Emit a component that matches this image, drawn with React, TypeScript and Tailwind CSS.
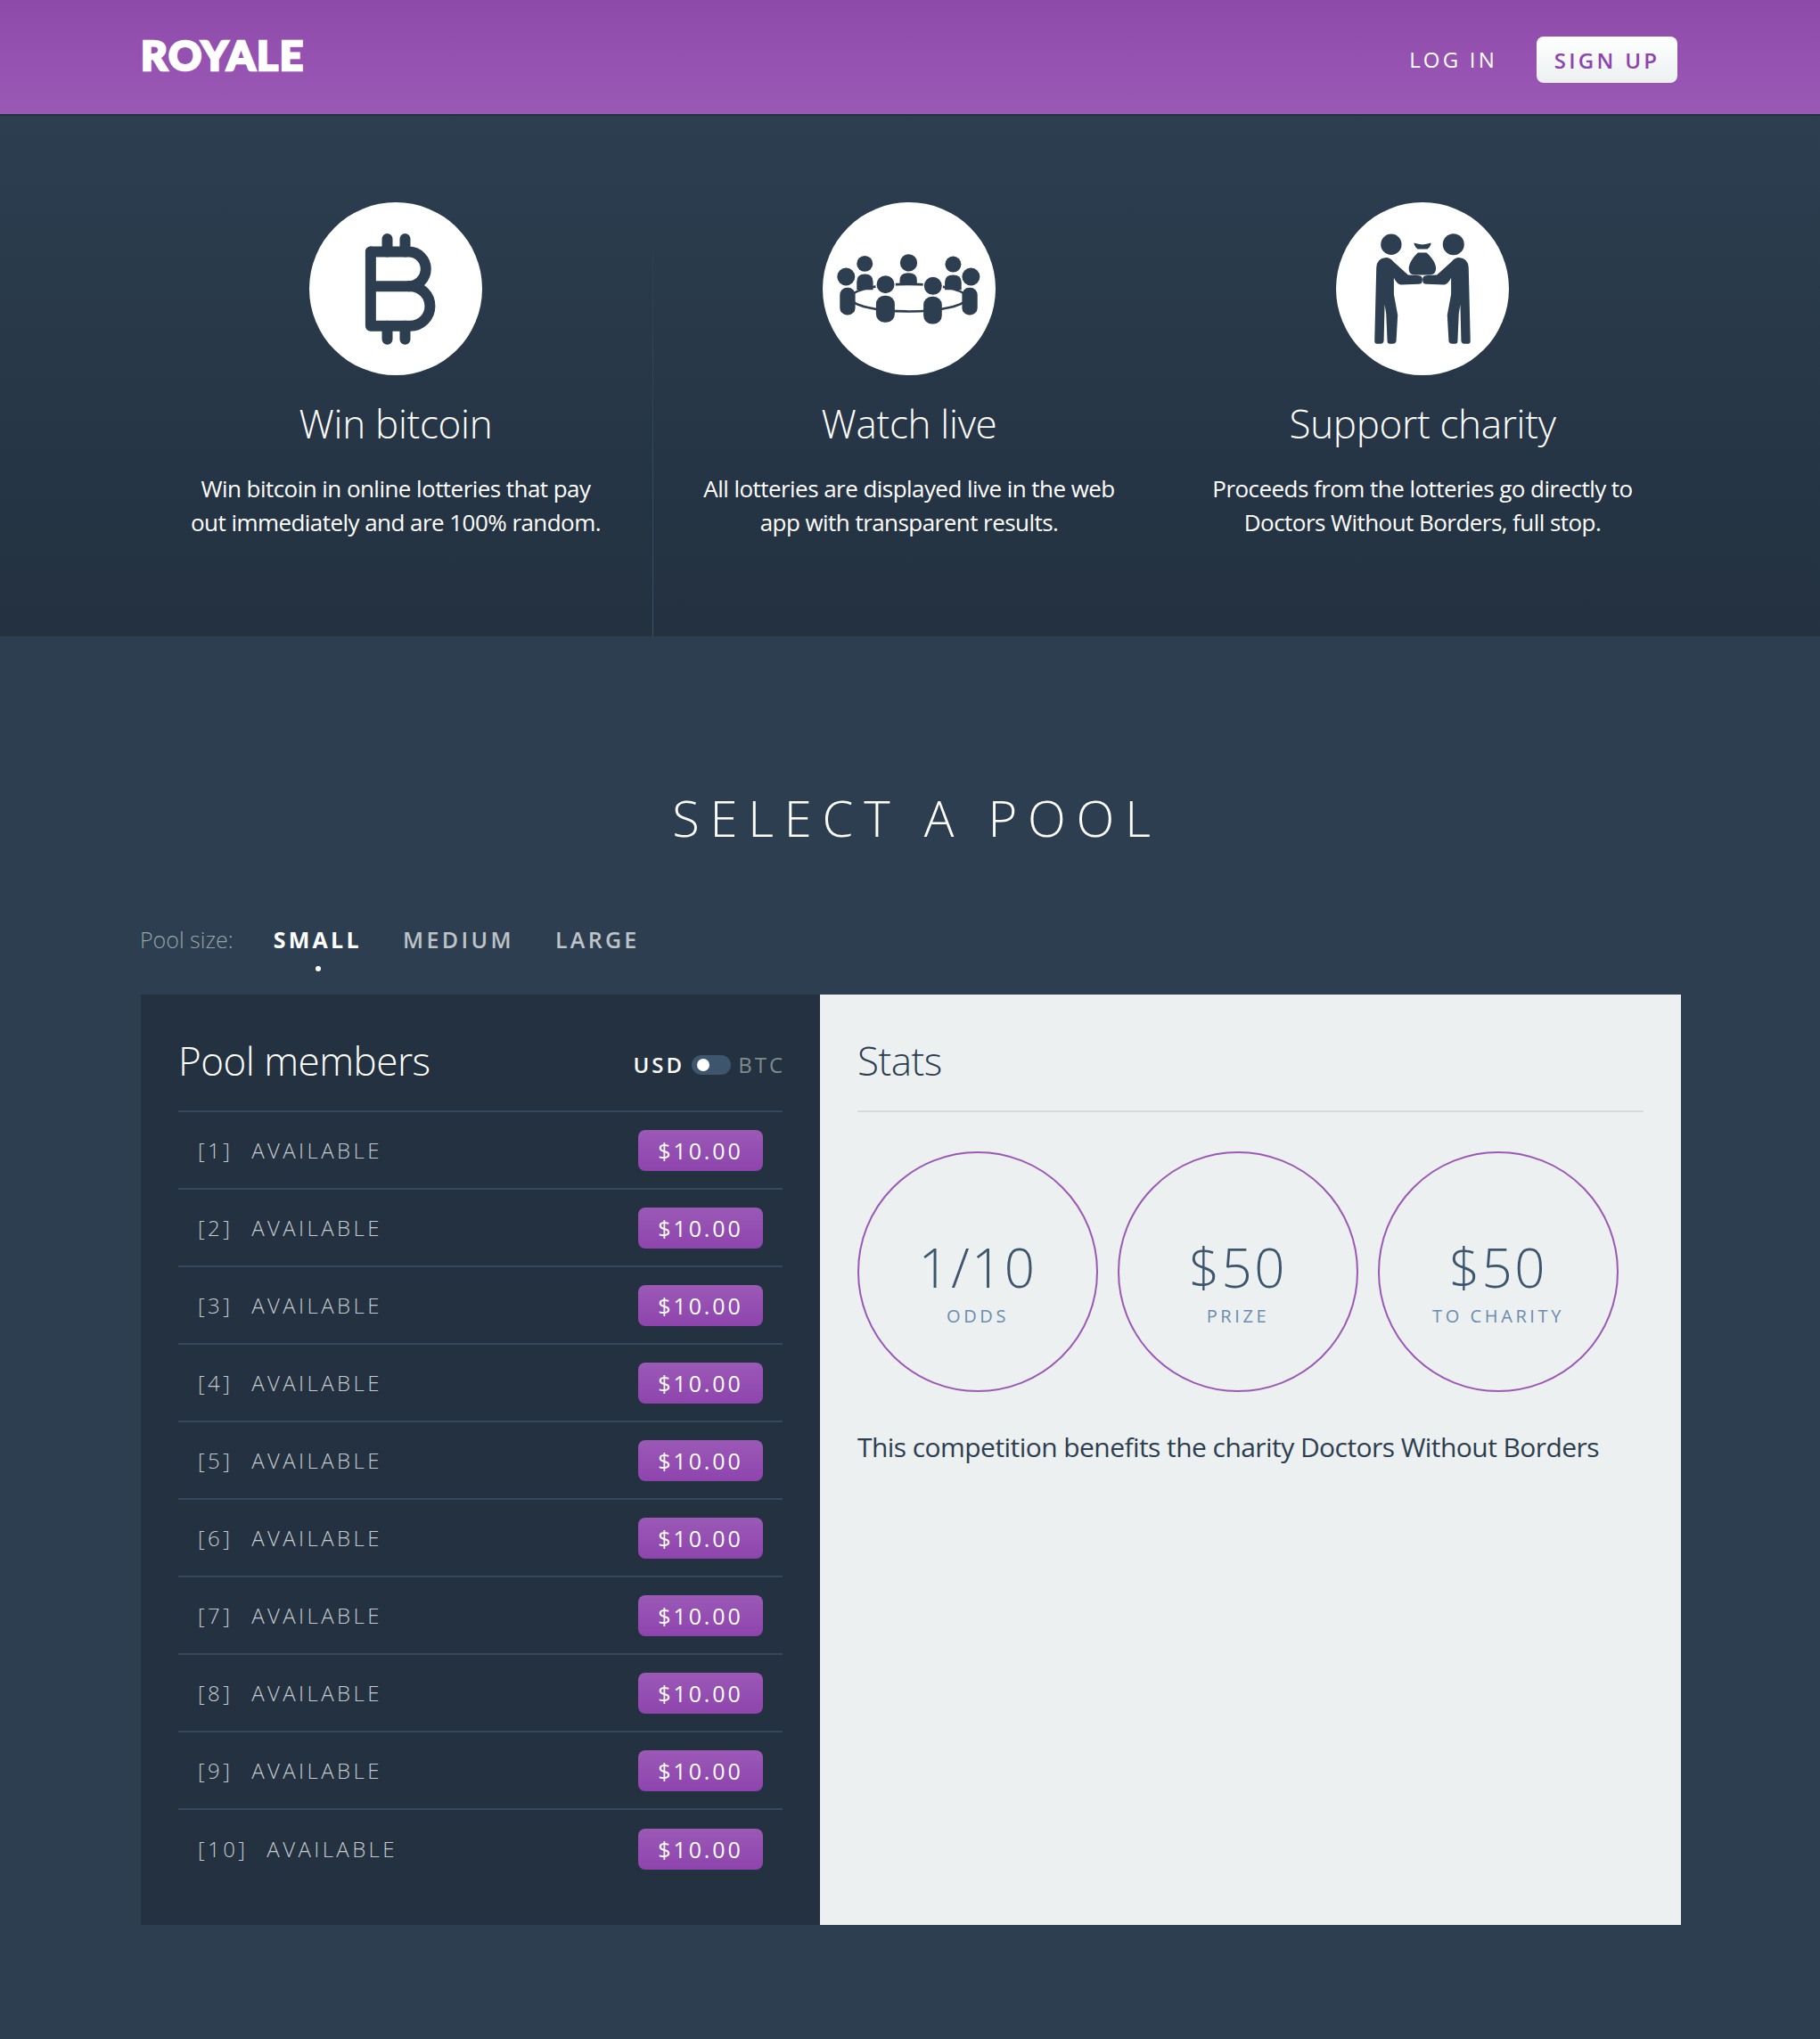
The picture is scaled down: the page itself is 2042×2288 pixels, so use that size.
import React from "react";

const dark = "#2c3e50";

function Bitcoin() {
  return (
    <svg viewBox="80 50 583 583" className="w-[194px] h-[194px] block">
      <circle cx="371.5" cy="341.5" r="291.5" fill="#fff" />
      <g fill="none" stroke={dark} strokeWidth="36" strokeLinecap="round" strokeLinejoin="round">
        <path d="M287 217 H415 A58 58 0 0 1 415 333 H287" />
        <path d="M415 333 H420 A67 67 0 0 1 420 467 H287 V217" />
        <path d="M343 173 V217 M403 173 V217 M343 467 V512 M403 467 V512" />
      </g>
    </svg>
  );
}

function People() {
  return (
    <svg viewBox="70 50 583 583" className="w-[194px] h-[194px] block">
      <circle cx="361.5" cy="341.5" r="291.5" fill="#fff" />
      <g fill={dark}>
        <ellipse cx="360" cy="372" rx="195" ry="46" fill="none" stroke={dark} strokeWidth="8" />
        <circle cx="212" cy="257" r="27" />
        <circle cx="360" cy="254" r="29" />
        <circle cx="510" cy="259" r="27" />
        <path d="M185 345 V318 Q185 292 212 292 Q240 292 240 318 V345 Z" />
        <path d="M330 325 V312 Q330 288 359 288 Q388 288 388 312 V325 Z" />
        <path d="M482 345 V320 Q482 295 510 295 Q538 295 538 320 V345 Z" />
        <circle cx="149" cy="301" r="30" />
        <circle cx="570" cy="301" r="30" />
        <rect x="128" y="338" width="52" height="92" rx="24" />
        <rect x="540" y="338" width="52" height="92" rx="24" />
        <circle cx="282" cy="327" r="32" stroke="#fff" strokeWidth="4" />
        <circle cx="442" cy="332" r="32" stroke="#fff" strokeWidth="4" />
        <rect x="250" y="365" width="63" height="90" rx="28" />
        <rect x="410" y="368" width="62" height="92" rx="28" />
      </g>
    </svg>
  );
}

const personPath =
  "M193 270 Q195 238 225 236 Q240 236 250 250 L300 295 Q340 296 345 300 Q351 308 346 322 Q342 326 335 326 L275 328 Q262 326 252 305 L252 360 L265 430 L260 518 Q258 527 248 527 L238 527 Q230 527 230 518 L226 425 L221 395 L218 518 Q216 527 208 527 L195 527 Q186 527 187 515 Z";

function Charity() {
  return (
    <svg viewBox="57 50 583 583" className="w-[194px] h-[194px] block">
      <circle cx="348.5" cy="341.5" r="291.5" fill="#fff" />
      <g fill={dark}>
        <circle cx="243" cy="192" r="35" />
        <circle cx="453" cy="192" r="36" />
        <path d={personPath} />
        <path d={personPath} transform="translate(697 0) scale(-1 1)" />
        <path d="M320 187 Q348 198 377 187 Q378 197 365 208 H332 Q320 197 320 187Z" />
        <path d="M333 220 H362 C385 240 398 265 393 280 Q390 295 370 295 H325 Q305 295 303 280 C300 262 312 240 333 220Z" />
      </g>
    </svg>
  );
}

function Feature({ icon, title, lines }: { icon: React.ReactNode; title: string; lines: string[] }) {
  return (
    <div className="flex flex-col items-center">
      {icon}
      <h3 className="mt-[24px] text-[44px] leading-[60px] font-light text-white tracking-[-0.3px]">{title}</h3>
      <p className="mt-[24px] text-[26px] leading-[38px] font-medium text-white tracking-[-0.55px] text-center whitespace-nowrap">
        {lines[0]}
        <br />
        {lines[1]}
      </p>
    </div>
  );
}

function Stat({ value, label }: { value: string; label: string }) {
  return (
    <div className="w-[270px] h-[270px] rounded-full border-2 border-[#9b59b6] flex flex-col items-center pt-[88px]">
      <div className="text-[60px] leading-[80px] font-light text-[#3d566e] tracking-[2.5px]">{value}</div>
      <div className="mt-[1px] text-[20px] leading-[28px] text-[#6b8cae] tracking-[3.6px]">{label}</div>
    </div>
  );
}

export default function App() {
  const rows = Array.from({ length: 10 }, (_, i) => i + 1);
  return (
    <div className="min-h-[2288px] bg-[#2c3e50] font-['Open_Sans',sans-serif]">
      <header className="h-[130px] border-b-2 border-[#22303f] bg-gradient-to-b from-[#8e4aa9] to-[#9b59b6] pl-[158px] pr-[160px] flex items-start justify-between">
        <div className="mt-[34px] font-['Lato',sans-serif] font-black text-[46px] leading-[56px] text-white tracking-[1.6px] [-webkit-text-stroke:2.5px_white]">
          ROYALE
        </div>
        <nav className="flex items-center mt-[40px]">
          <span className="text-[24px] leading-[54px] font-medium text-white tracking-[3.2px]">LOG IN</span>
          <span className="ml-[44px] w-[158px] h-[52px] rounded-[8px] bg-gradient-to-b from-white to-[#ecf0f1] text-[#8e44ad] text-[24px] leading-[54px] font-semibold tracking-[3.3px] text-center">
            SIGN UP
          </span>
        </nav>
      </header>

      <section className="relative h-[584px] bg-gradient-to-b from-[#2c3e50] to-[#233140]">
        <div className="ml-[156px] w-[1728px] grid grid-cols-3 pt-[97px]">
          <Feature icon={<Bitcoin />} title="Win bitcoin" lines={["Win bitcoin in online lotteries that pay", "out immediately and are 100% random."]} />
          <Feature icon={<People />} title="Watch live" lines={["All lotteries are displayed live in the web", "app with transparent results."]} />
          <Feature icon={<Charity />} title="Support charity" lines={["Proceeds from the lotteries go directly to", "Doctors Without Borders, full stop."]} />
        </div>
        <div className="absolute left-[732px] top-[150px] bottom-0 w-px bg-gradient-to-b from-[#2c3e50] to-[#3a5068]" />
      </section>

      <h1 className="mt-[170px] pl-[15px] text-center text-[56px] leading-[66px] font-light text-white tracking-[11.8px]">SELECT A POOL</h1>

      <div className="ml-[157px] mt-[86px] flex items-start h-[80px]">
        <span className="text-[25px] leading-[36px] font-light text-[#95a5a6] tracking-[0px]">Pool size:</span>
        <span className="relative ml-[45px] text-[25px] leading-[36px] font-bold text-white tracking-[3.3px]">
          SMALL
          <span className="absolute left-[47px] top-[48px] w-[6px] h-[6px] rounded-full bg-white" />
        </span>
        <span className="ml-[46px] text-[25px] leading-[36px] font-semibold text-[#bdc3c7] tracking-[3.4px]">MEDIUM</span>
        <span className="ml-[46px] text-[25px] leading-[36px] font-semibold text-[#bdc3c7] tracking-[3.3px]">LARGE</span>
      </div>

      <div className="ml-[158px] w-[1728px] h-[1044px] flex">
        <div className="w-[762px] bg-[#233140] px-[42px]">
          <div className="h-[132px] border-b-2 border-[#34495e] flex items-start justify-between">
            <h2 className="mt-[44px] text-[44px] leading-[60px] font-light text-white tracking-[-0.5px]">Pool members</h2>
            <div className="mt-[63px] mr-[-3px] flex items-center text-[24px] leading-[32px] tracking-[3px]">
              <span className="font-semibold text-white">USD</span>
              <span className="mx-[8px] relative w-[44px] h-[22px] rounded-full bg-[#3d566e]">
                <span className="absolute left-[6px] top-[4px] w-[14px] h-[14px] rounded-full bg-white" />
              </span>
              <span className="text-[#7f8c8d]">BTC</span>
            </div>
          </div>
          {rows.map((n) => (
            <div key={n} className={`h-[87px] flex items-center justify-between pl-[22px] pr-[22px] ${n < 10 ? "border-b-2 border-[#34495e]" : ""}`}>
              <div className="text-[24px] font-light text-[#c5cbcf] tracking-[3.4px]">
                <span>[{n}]</span>
                <span className="ml-[21px]">AVAILABLE</span>
              </div>
              <div className="w-[140px] h-[46px] rounded-[8px] bg-gradient-to-b from-[#9b59b6] to-[#8e44ad] text-center text-[25px] leading-[46px] font-medium text-white tracking-[2.9px]">
                $10.00
              </div>
            </div>
          ))}
        </div>
        <div className="flex-1 bg-[#ecf0f1] px-[42px]">
          <div className="h-[132px] border-b-2 border-[#d3dcdc]">
            <h2 className="pt-[44px] text-[44px] leading-[60px] font-light text-[#2c3e50] tracking-[-0.5px]">Stats</h2>
          </div>
          <div className="mt-[44px] flex gap-[22px]">
            <Stat value="1/10" label="ODDS" />
            <Stat value="$50" label="PRIZE" />
            <Stat value="$50" label="TO CHARITY" />
          </div>
          <p className="mt-[40px] text-[30px] leading-[44px] text-[#2c3e50] tracking-[-0.56px]">
            This competition benefits the charity Doctors Without Borders
          </p>
        </div>
      </div>
    </div>
  );
}
